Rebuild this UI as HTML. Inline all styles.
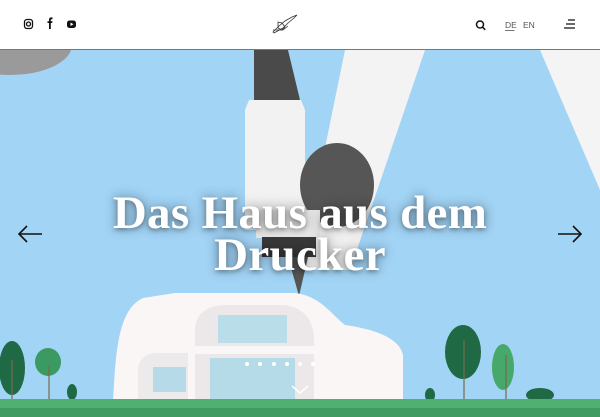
<!DOCTYPE html>
<html><head><meta charset="utf-8"><style>
*{margin:0;padding:0;box-sizing:border-box}
body{width:600px;height:417px;overflow:hidden;background:#a2d4f6;font-family:"Liberation Sans",sans-serif;position:relative}
header{position:absolute;left:0;top:0;width:600px;height:50px;background:#fff;border-bottom:1px solid #777;z-index:5}
.t{position:absolute;left:0;width:600px;text-align:center;color:#fff;font-family:"Liberation Serif",serif;font-weight:bold;font-size:47px;line-height:42px;letter-spacing:0.3px;text-shadow:0 0 12px rgba(0,0,0,.45),0 2px 4px rgba(0,0,0,.3);z-index:3}
</style></head><body>
<header>
<svg width="600" height="50" style="position:absolute;left:0;top:0">
<g fill="none" stroke="#111" stroke-width="1.3">
<rect x="24.5" y="19.5" width="8" height="9" rx="2.5"/><circle cx="28.5" cy="24" r="2"/>
</g>
<path d="M49 29v-6h-1.5v-1.8H49v-1.5c0-1.6.9-2.3 2.3-2.3h1.2v1.8h-.9c-.6 0-.8.3-.8.8v1.2h1.7l-.3 1.8h-1.4v6z" fill="#111"/>
<rect x="67" y="20.5" width="9" height="7.5" rx="2.5" fill="#111"/><path d="M70.5 22.5v3.5l3-1.75z" fill="#fff"/>
<g fill="none" stroke="#333" stroke-width=".8">
<path d="M273 32l6-6 6-5 7-4 5-2-3 3-6 5-5 5-9 5z"/><path d="M278 22l4 1 3 4-3 3-4-2z"/><path d="M273 30l10 0 5-4"/>
</g>
<g fill="none" stroke="#111" stroke-width="1.5"><circle cx="480" cy="24.5" r="3.5"/><path d="M482.6 27.2l2.6 2.6"/></g>
<text x="505" y="28" font-size="8.5" fill="#555">DE</text><path d="M505 30.5h9.5" stroke="#555" stroke-width=".8"/>
<text x="523" y="28" font-size="8.5" fill="#555">EN</text>
<g stroke="#111" stroke-width="1.2"><path d="M568 20h7M566 24h9M564 28h11"/></g>
</svg>
</header>
<svg width="600" height="417" style="position:absolute;left:0;top:0">
<ellipse cx="10" cy="45" rx="62" ry="30" fill="#9a9a9a"/>
<path d="M540 50h60v140z" fill="#f4f4f4"/>
<path d="M345 50h80l-75 220h-50z" fill="#f3f3f3"/>
<path d="M254 50h34l12 50h-46z" fill="#4a4a4a"/>
<path d="M249 100h52l4 10v120h-60v-120z" fill="#f2f2f2"/>
<ellipse cx="337" cy="185" rx="37" ry="42" fill="#565656"/>
<path d="M256 210h64v28h-64z" fill="#e8e8e8"/><path d="M262 237h54v20h-54z" fill="#3a3a3a"/>
<path d="M288 257h20l-9 39z" fill="#555"/>
<path d="M113 400c3-50 5-90 30-102l32-5h120c25 3 35 20 50 32 35 5 55 15 58 30v45z" fill="#fbf6f6"/>
<path d="M195 330c0-18 15-25 30-25h55c20 0 34 12 34 35v60h-119z" fill="#ece8ea"/>
<rect x="218" y="315" width="69" height="28" fill="#b9dde9"/>
<rect x="195" y="346" width="119" height="8" fill="#f8f6f6"/>
<rect x="210" y="358" width="85" height="42" fill="#b5dbe8"/>
<path d="M138 370c0-10 8-17 18-17h32v47h-50z" fill="#eceaea"/>
<rect x="153" y="367" width="33" height="25" fill="#b7dae8"/>
<g fill="#fff"><circle cx="247" cy="364" r="2"/><circle cx="260" cy="364" r="2"/><circle cx="274" cy="364" r="2"/><circle cx="287" cy="364" r="2"/><circle cx="300" cy="364" r="2"/><circle cx="313" cy="364" r="2"/></g>
<path d="M292 386l8 7 8-7" stroke="#fff" stroke-width="1.5" fill="none"/>
<g fill="#1f6a45"><ellipse cx="12" cy="368" rx="13" ry="27"/><ellipse cx="463" cy="352" rx="18" ry="27"/><ellipse cx="48" cy="362" rx="13" ry="14" fill="#3a9a62"/><ellipse cx="503" cy="367" rx="11" ry="23" fill="#46a86a"/><ellipse cx="72" cy="392" rx="5" ry="8"/><ellipse cx="540" cy="395" rx="14" ry="7"/><ellipse cx="430" cy="395" rx="5" ry="7"/></g>
<g stroke="#7a6a4a" stroke-width="1.2"><path d="M12 360v40M464 340v60M49 365v35M506 355v45"/></g>
<rect x="0" y="399" width="600" height="18" fill="#4fb072"/>
<rect x="0" y="408" width="600" height="9" fill="#3a8c5a" opacity=".6"/>
<g fill="none" stroke="#111" stroke-width="1.6"><path d="M42 234H19M27 226l-8 8 8 8"/><path d="M558 234h23M573 226l8 8-8 8"/></g>
</svg>
<div class="t" style="top:192px">Das Haus aus dem</div>
<div class="t" style="top:234px">Drucker</div>
</body></html>
